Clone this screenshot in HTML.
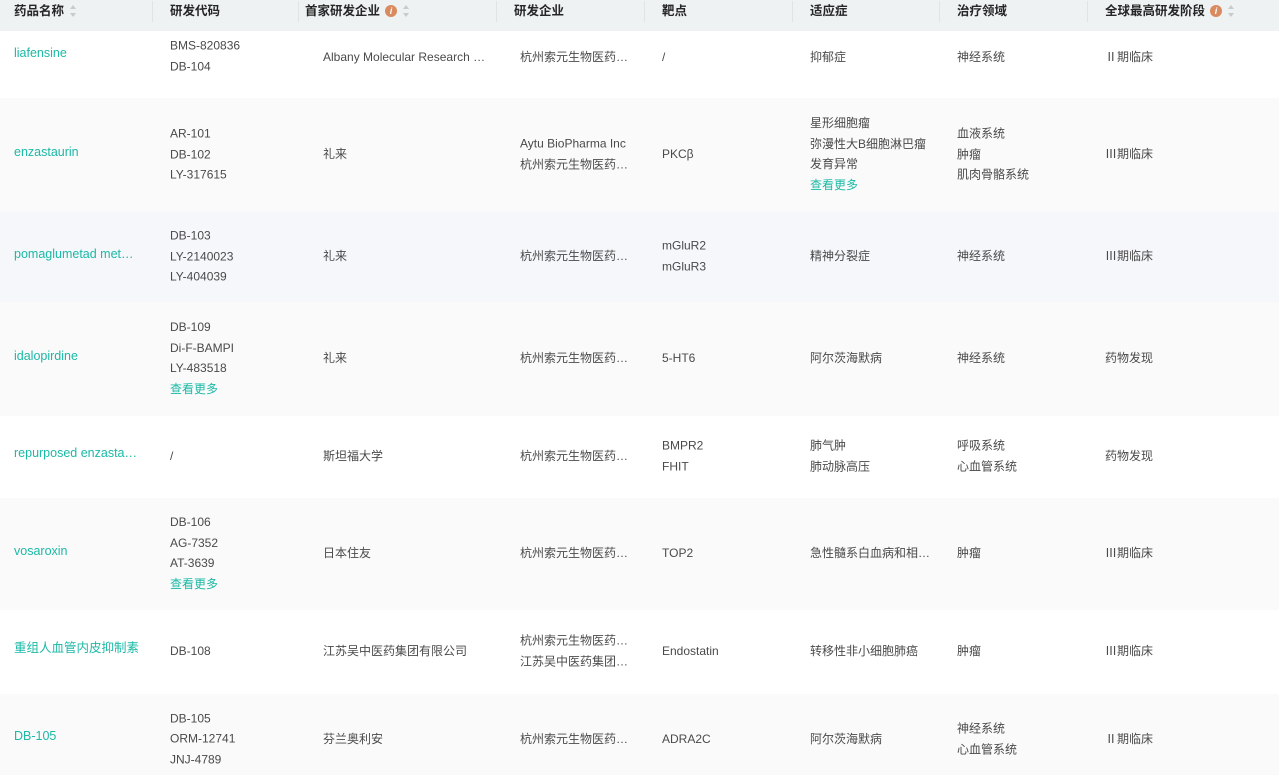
<!DOCTYPE html>
<html><head><meta charset="utf-8"><style>
*{margin:0;padding:0;box-sizing:border-box}
body{width:1279px;height:775px;overflow:hidden;background:#fff;font-family:"Liberation Sans","Noto Sans CJK SC",sans-serif;font-size:12px;color:#4a4a4a;position:relative}
.hd{position:absolute;left:0;top:0;width:1279px;height:31px;background:#eef2f3}
.hd .c{position:absolute;top:0;line-height:22px;font-weight:bold;color:#262626;font-size:12.5px;white-space:nowrap}
.dv{position:absolute;top:1px;width:1px;height:21px;background:#dfe4e6}
.sort{display:inline-block;vertical-align:middle;margin-left:6px;width:7px;height:12px;position:relative;top:-1px}
.sort:before{content:"";position:absolute;top:0;left:0;border-left:3.5px solid transparent;border-right:3.5px solid transparent;border-bottom:4px solid #c6cbcd}
.sort:after{content:"";position:absolute;bottom:0;left:0;border-left:3.5px solid transparent;border-right:3.5px solid transparent;border-top:4px solid #c6cbcd}
.inf{display:inline-block;vertical-align:middle;margin-left:5px;width:12px;height:12px;border-radius:50%;background:#d98a5e;color:#fff;font-size:9px;line-height:12px;text-align:center;font-style:italic;font-weight:bold;position:relative;top:-1px}
.r{position:absolute;left:0;width:1279px}
.c{position:absolute;line-height:20.5px;white-space:nowrap}
.b{transform:translateY(-50%)}
.n{color:#1bb9a6;font-size:12.5px}
.t{color:#1bb9a6}
.e{overflow:hidden;text-overflow:ellipsis}
.w{display:inline-block;width:114px;vertical-align:top}
</style></head><body>
<div class="hd">
<div class="c" style="left:14px">药品名称<span class="sort"></span></div>
<div class="dv" style="left:152px"></div>
<div class="c" style="left:170px">研发代码</div>
<div class="dv" style="left:298px"></div>
<div class="c" style="left:305px">首家研发企业<span class="inf">i</span><span class="sort"></span></div>
<div class="dv" style="left:496px"></div>
<div class="c" style="left:514px">研发企业</div>
<div class="dv" style="left:644px"></div>
<div class="c" style="left:662px">靶点</div>
<div class="dv" style="left:792px"></div>
<div class="c" style="left:810px">适应症</div>
<div class="dv" style="left:939px"></div>
<div class="c" style="left:957px">治疗领域</div>
<div class="dv" style="left:1087px"></div>
<div class="c" style="left:1105px">全球最高研发阶段<span class="inf">i</span><span class="sort"></span></div>
</div>

<div class="r" style="top:31px;height:67px;background:#fff"></div>
<div class="r" style="top:98px;height:114px;background:#fafafb"></div>
<div class="r" style="top:212px;height:90px;background:#f5f7fa"></div>
<div class="r" style="top:302px;height:114px;background:#fafafb"></div>
<div class="r" style="top:416px;height:82px;background:#fff"></div>
<div class="r" style="top:498px;height:112px;background:#fafafa"></div>
<div class="r" style="top:610px;height:84px;background:#fff"></div>
<div class="r" style="top:694px;height:81px;background:#fafafa"></div>

<div class="c b n" style="left:14px;top:53px">liafensine</div>
<div class="c b" style="left:170px;top:56px">BMS-820836<br>DB-104</div>
<div class="c b e" style="left:323px;top:57px;width:163px">Albany Molecular Research Inc</div>
<div class="c b e" style="left:520px;top:57px;width:114px">杭州索元生物医药股份有限公司</div>
<div class="c b" style="left:662px;top:57px">/</div>
<div class="c b" style="left:810px;top:57px">抑郁症</div>
<div class="c b" style="left:957px;top:57px">神经系统</div>
<div class="c b" style="left:1105px;top:57px">Ⅱ期临床</div>

<div class="c b n" style="left:14px;top:152px">enzastaurin</div>
<div class="c b" style="left:170px;top:154px">AR-101<br>DB-102<br>LY-317615</div>
<div class="c b" style="left:323px;top:154px">礼来</div>
<div class="c b" style="left:520px;top:154px">Aytu BioPharma Inc<br><span class="e w">杭州索元生物医药股份有限公司</span></div>
<div class="c b" style="left:662px;top:154px">PKCβ</div>
<div class="c b" style="left:810px;top:154px">星形细胞瘤<br>弥漫性大B细胞淋巴瘤<br>发育异常<br><span class="t">查看更多</span></div>
<div class="c b" style="left:957px;top:154px">血液系统<br>肿瘤<br>肌肉骨骼系统</div>
<div class="c b" style="left:1105px;top:154px">Ⅲ期临床</div>

<div class="c b n e" style="left:14px;top:254px;width:124px">pomaglumetad methionil</div>
<div class="c b" style="left:170px;top:256px">DB-103<br>LY-2140023<br>LY-404039</div>
<div class="c b" style="left:323px;top:256px">礼来</div>
<div class="c b e" style="left:520px;top:256px;width:114px">杭州索元生物医药股份有限公司</div>
<div class="c b" style="left:662px;top:256px">mGluR2<br>mGluR3</div>
<div class="c b" style="left:810px;top:256px">精神分裂症</div>
<div class="c b" style="left:957px;top:256px">神经系统</div>
<div class="c b" style="left:1105px;top:256px">Ⅲ期临床</div>

<div class="c b n" style="left:14px;top:356px">idalopirdine</div>
<div class="c b" style="left:170px;top:358px">DB-109<br>Di-F-BAMPI<br>LY-483518<br><span class="t">查看更多</span></div>
<div class="c b" style="left:323px;top:358px">礼来</div>
<div class="c b e" style="left:520px;top:358px;width:114px">杭州索元生物医药股份有限公司</div>
<div class="c b" style="left:662px;top:358px">5-HT6</div>
<div class="c b" style="left:810px;top:358px">阿尔茨海默病</div>
<div class="c b" style="left:957px;top:358px">神经系统</div>
<div class="c b" style="left:1105px;top:358px">药物发现</div>

<div class="c b n e" style="left:14px;top:453px;width:124px">repurposed enzastaurin</div>
<div class="c b" style="left:170px;top:456px">/</div>
<div class="c b" style="left:323px;top:456px">斯坦福大学</div>
<div class="c b e" style="left:520px;top:456px;width:114px">杭州索元生物医药股份有限公司</div>
<div class="c b" style="left:662px;top:456px">BMPR2<br>FHIT</div>
<div class="c b" style="left:810px;top:456px">肺气肿<br>肺动脉高压</div>
<div class="c b" style="left:957px;top:456px">呼吸系统<br>心血管系统</div>
<div class="c b" style="left:1105px;top:456px">药物发现</div>

<div class="c b n" style="left:14px;top:551px">vosaroxin</div>
<div class="c b" style="left:170px;top:553px">DB-106<br>AG-7352<br>AT-3639<br><span class="t">查看更多</span></div>
<div class="c b" style="left:323px;top:553px">日本住友</div>
<div class="c b e" style="left:520px;top:553px;width:114px">杭州索元生物医药股份有限公司</div>
<div class="c b" style="left:662px;top:553px">TOP2</div>
<div class="c b e" style="left:810px;top:553px;width:126px">急性髓系白血病和相关疾病</div>
<div class="c b" style="left:957px;top:553px">肿瘤</div>
<div class="c b" style="left:1105px;top:553px">Ⅲ期临床</div>

<div class="c b n" style="left:14px;top:648px">重组人血管内皮抑制素</div>
<div class="c b" style="left:170px;top:651px">DB-108</div>
<div class="c b" style="left:323px;top:651px">江苏吴中医药集团有限公司</div>
<div class="c b" style="left:520px;top:651px"><span class="e w">杭州索元生物医药股份有限公司</span><br><span class="e w">江苏吴中医药集团有限公司</span></div>
<div class="c b" style="left:662px;top:651px">Endostatin</div>
<div class="c b" style="left:810px;top:651px">转移性非小细胞肺癌</div>
<div class="c b" style="left:957px;top:651px">肿瘤</div>
<div class="c b" style="left:1105px;top:651px">Ⅲ期临床</div>

<div class="c b n" style="left:14px;top:736px">DB-105</div>
<div class="c b" style="left:170px;top:738.5px">DB-105<br>ORM-12741<br>JNJ-4789</div>
<div class="c b" style="left:323px;top:739px">芬兰奥利安</div>
<div class="c b e" style="left:520px;top:739px;width:114px">杭州索元生物医药股份有限公司</div>
<div class="c b" style="left:662px;top:739px">ADRA2C</div>
<div class="c b" style="left:810px;top:739px">阿尔茨海默病</div>
<div class="c b" style="left:957px;top:739px">神经系统<br>心血管系统</div>
<div class="c b" style="left:1105px;top:739px">Ⅱ期临床</div>
</body></html>
